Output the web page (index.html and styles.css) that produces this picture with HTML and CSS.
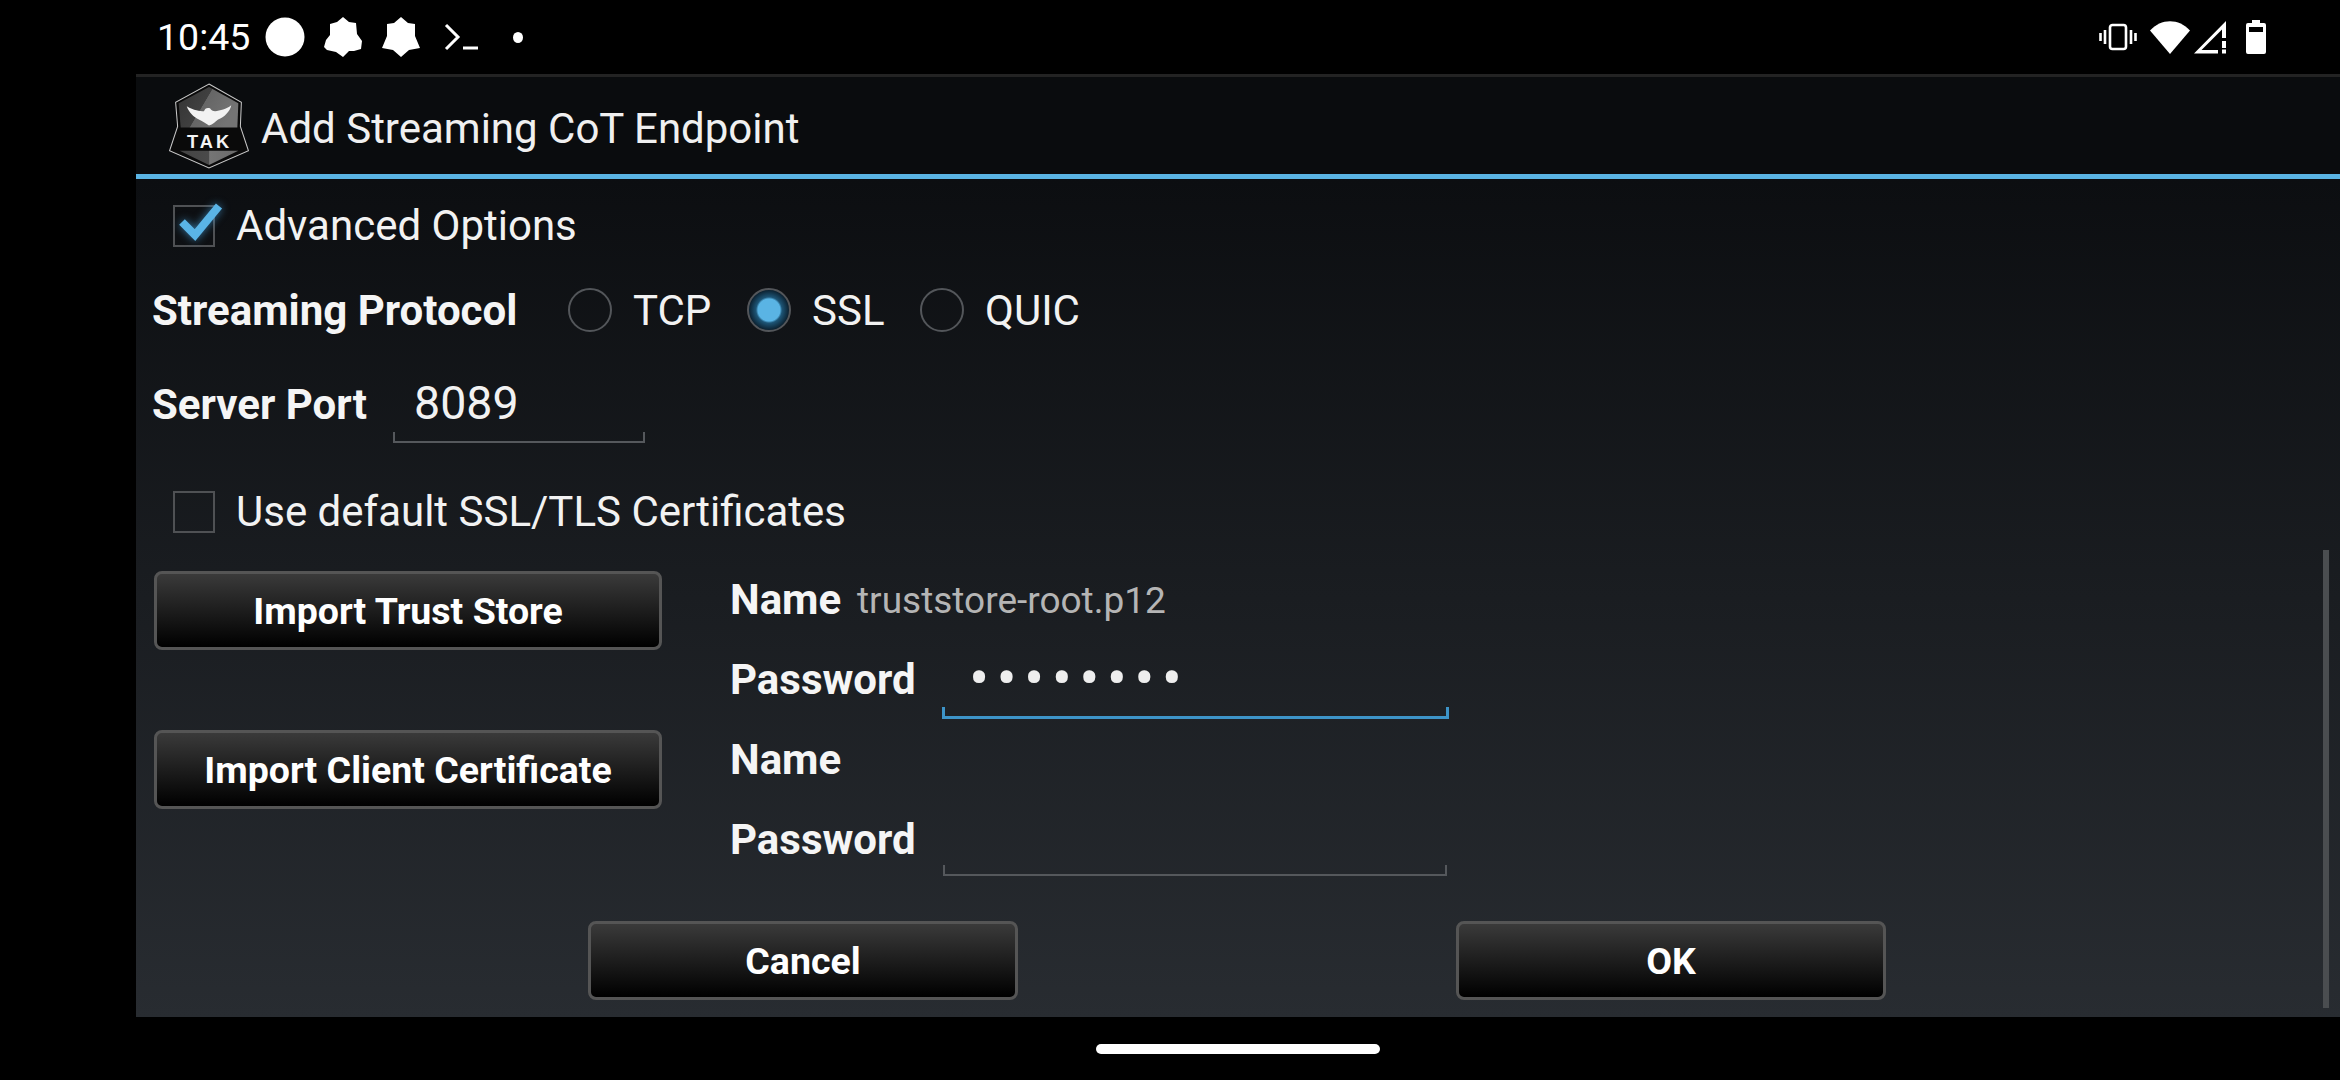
FILE: index.html
```html
<!DOCTYPE html>
<html lang="en">
  <head>
    <meta charset="UTF-8" />
    <title>Add Streaming CoT Endpoint</title>
    <link rel="stylesheet" href="styles.css">
  </head>
  <body>
    <header class="status-bar">
      <div class="status-left">
        <span class="clock">10:45</span>
        <svg class="status-icon" width="40" height="40" viewBox="0 0 40 40"><ellipse cx="20" cy="20" rx="19.500" ry="19.500" fill="#fff"/></svg>
        <svg class="status-icon badge-a" width="38" height="40" viewBox="0 0 38 40"><path d="M19 0l6 5 7 1 1 11 5 7-1 8-7 2-5 0-6 6-7-5-9-2-3-3 2-7 4-5V7l7-2z" fill="#fff"/></svg>
        <svg class="status-icon badge-b" width="38" height="40" viewBox="0 0 38 40"><path d="M19 0l7 6 7 1 0 12 5 12-11 2-8 7-8-7-11-2 5-12 0-12 7-1z" fill="#fff"/></svg>
        <svg class="status-icon term" width="34" height="28" viewBox="0 0 34 28"><path d="M2 2l12 12L2 26" fill="none" stroke="#fff" stroke-width="3"/><path d="M19 25h15" stroke="#fff" stroke-width="3"/></svg>
        <span class="status-dot"></span>
      </div>
      <div class="status-right">
        <svg width="38" height="28" viewBox="0 0 38 28"><rect x="11" y="2" width="16" height="24" rx="2.500" fill="none" stroke="#fff" stroke-width="2.600"/><path d="M6 7v14M1.500 10v8M32 7v14M36.500 10v8" stroke="#fff" stroke-width="2.600"/></svg>
        <svg class="wifi" width="40" height="33" viewBox="0 0 40 33"><path d="M0 9.500C11 -3 29 -3 40 9.500L20 33z" fill="#fff"/></svg>
        <svg class="signal" width="33" height="33" viewBox="0 0 33 33"><path d="M32 0v17h-4V8.500L7.500 29H24v3.500H0z" fill="#fff"/><path d="M28 20h4v7h-4zM28 28.500h4v4h-4z" fill="#fff"/></svg>
        <svg class="battery" width="20" height="34" viewBox="0 0 20 34"><path fill-rule="evenodd" d="M6 0h8v3h4a2 2 0 0 1 2 2v27a2 2 0 0 1-2 2H2a2 2 0 0 1-2-2V5a2 2 0 0 1 2-2h4zM3 7v5h14V7z" fill="#fff"/></svg>
      </div>
    </header>

    <main class="app">
      <div class="title-bar">
        <!-- TAK shield, cropped to the size of the launcher icon -->
        <svg class="tak-logo" width="82" height="86" viewBox="10 9 78 85">
          <defs>
            <linearGradient id="shieldTop" x1="0" y1="0" x2="1" y2="0.4">
              <stop offset="0" stop-color="#333"/>
              <stop offset="0.5" stop-color="#404040"/>
              <stop offset="0.51" stop-color="#666"/>
              <stop offset="1" stop-color="#747474"/>
            </linearGradient>
            <linearGradient id="shieldBottom" x1="0" y1="0" x2="1" y2="0">
              <stop offset="0" stop-color="#444"/>
              <stop offset="0.5" stop-color="#4a4a4a"/>
              <stop offset="0.51" stop-color="#757575"/>
              <stop offset="1" stop-color="#6a6a6a"/>
            </linearGradient>
          </defs>
          <path d="M49 10L81 28 80 52 88 76 49 93 10 76 18 52 16 28z" fill="#0a0a0a" stroke="#c9c9c9" stroke-width="1"/>
          <path d="M49 13L78 29 77 53H21L19 29z" fill="url(#shieldTop)"/>
          <path d="M20 76H78L49 90z" fill="url(#shieldBottom)"/>
          <path d="M27 32C34 36 40 37 44 37 45 34 47 33 50 34 51 36 53 37 55 37 60 36 66 35 71 31 70 37 64 43 58 45 55 47 53 50 49 51 46 49 43 47 39 45 34 43 29 38 27 32z" fill="#f2f2f2"/>
          <text class="tak-text" x="49.500" y="73" text-anchor="middle">TAK</text>
        </svg>
        <h1 class="title">Add Streaming CoT Endpoint</h1>
      </div>

      <form class="content">
        <div class="row row-advanced">
          <label class="check">
            <span class="check-box">
              <svg class="check-mark" width="56" height="48" viewBox="0 0 56 48"><path d="M9 25l13 13L46 9" fill="none" stroke="#5ab4e6" stroke-width="8"/></svg>
            </span>
            <span class="check-text">Advanced Options</span>
          </label>
        </div>

        <div class="row row-protocol">
          <span class="label protocol-label">Streaming Protocol</span>
          <span class="radio"></span><span class="radio-text">TCP</span>
          <span class="radio radio-on"></span><span class="radio-text">SSL</span>
          <span class="radio"></span><span class="radio-text">QUIC</span>
        </div>

        <div class="row row-port">
          <span class="label port-label">Server Port</span>
          <div class="field field-port">
            <span class="field-value port-value">8089</span>
            <span class="field-line"></span>
          </div>
        </div>

        <div class="row row-default">
          <label class="check">
            <span class="check-box"></span>
            <span class="check-text">Use default SSL/TLS Certificates</span>
          </label>
        </div>

        <div class="certs">
          <div class="cert-buttons">
            <button type="button" class="btn btn-cert">Import Trust Store</button>
            <button type="button" class="btn btn-cert">Import Client Certificate</button>
          </div>
          <div class="cert-rows">
            <div class="cert-row">
              <span class="label name-label">Name</span>
              <span class="file-name">truststore-root.p12</span>
            </div>
            <div class="cert-row">
              <span class="label pass-label">Password</span>
              <div class="field field-pass field-focus">
                <span class="field-value dots">••••••••</span>
                <span class="field-line"></span>
              </div>
            </div>
            <div class="cert-row">
              <span class="label name-label">Name</span>
            </div>
            <div class="cert-row">
              <span class="label pass-label">Password</span>
              <div class="field field-pass field-idle">
                <span class="field-value"></span>
                <span class="field-line"></span>
              </div>
            </div>
          </div>
        </div>

        <div class="actions">
          <button type="button" class="btn btn-action">Cancel</button>
          <button type="button" class="btn btn-action">OK</button>
        </div>

        <div class="scrollbar"></div>
      </form>
    </main>

    <div class="nav-bar"><span class="home-pill"></span></div>
  </body>
</html>
```

FILE: styles.css
```css
* {
  box-sizing: border-box;
}

html,
body {
  margin: 0;
  padding: 0;
  width: 2340px;
  height: 1080px;
  overflow: hidden;
  background-color: #000;
}

body {
  font-family: Roboto, "Noto Sans", sans-serif;
  color: #f2f2f2;
  display: flex;
  flex-direction: column;
}

/* Status bar */
.status-bar {
  height: 74px;
  flex: none;
  display: flex;
  justify-content: space-between;
  align-items: center;
  padding-left: 157px;
  padding-right: 74px;
  color: #fff;
}

.status-left,
.status-right {
  display: flex;
  align-items: center;
}

.clock {
  font-size: 37.500px;
  width: 108px;
}

.status-icon {
  display: block;
}

.badge-a {
  margin-left: 19px;
}

.badge-b {
  margin-left: 20px;
}

.term {
  margin-left: 24px;
}

.status-dot {
  width: 10px;
  height: 11px;
  margin-left: 35px;
  border-radius: 50%;
  background-color: #fff;
}

.status-right svg {
  display: block;
}

.status-right .wifi {
  margin-left: 13px;
}

.status-right .signal {
  margin-left: 4px;
}

.status-right .battery {
  margin-left: 19px;
}

/* App window */
.app {
  margin-left: 136px;
  height: 943px;
  flex: none;
  display: flex;
  flex-direction: column;
  border-top: 3px solid #232323;
}

.title-bar {
  height: 102px;
  flex: none;
  display: flex;
  align-items: center;
  padding-left: 32px;
  background-color: #0a0c0e;
  border-bottom: 5px solid #5ab4e4;
}

.tak-logo {
  display: block;
  flex: none;
  margin-top: 1px;
}

.tak-text {
  font-family: "Liberation Sans", sans-serif;
  font-size: 18px;
  font-weight: 700;
  letter-spacing: 3px;
  fill: #f5f5f5;
}

.title {
  margin: 5px 0 0 11px;
  font-size: 42px;
  font-weight: 400;
  color: #f0f0f0;
}

.content {
  position: relative;
  flex: 1;
  padding-left: 16px;
  background: linear-gradient(#0c0e11, #282c31);
}

.row {
  display: flex;
  align-items: center;
}

.row-advanced {
  height: 93px;
}

.row-protocol {
  height: 76px;
}

.row-port {
  height: 112px;
}

.row-default {
  height: 95px;
  margin-top: 4px;
}

.label {
  font-size: 42px;
  font-weight: 700;
  color: #f5f5f5;
}

/* Check boxes */
.check {
  display: flex;
  align-items: center;
  margin-left: 21px;
}

.check-box {
  position: relative;
  width: 42px;
  height: 42px;
  border: 2px solid #4f5154;
}

.check-mark {
  position: absolute;
  left: -2px;
  top: -10px;
  filter: drop-shadow(0 0 4px rgba(70, 160, 220, 0.7));
}

.check-text {
  margin-left: 21px;
  font-size: 42px;
}

/* Radio group */
.protocol-label {
  width: 416px;
}

.radio {
  width: 44px;
  height: 44px;
  flex: none;
  border: 2px solid #53565a;
  border-radius: 50%;
}

.radio-on {
  background: radial-gradient(circle, #5ab4e4 0 11px, #1d5576 13px, #0c2130 20px);
}

.radio-text {
  width: 135px;
  padding-left: 21px;
  font-size: 42px;
}

.radio-text:nth-of-type(5) {
  width: 129px;
}

/* Text fields */
.field {
  display: flex;
  flex-direction: column;
}

.field-value {
  display: block;
  flex: 1;
  min-height: 0;
}

.field-line {
  display: block;
  height: 11px;
  flex: none;
  border: 2px solid #55585c;
  border-top: none;
}

.port-label {
  width: 241px;
}

.field-port {
  width: 252px;
  height: 78px;
}

.port-value {
  padding-left: 21px;
  font-size: 46.500px;
  line-height: 76px;
}

.field-pass {
  width: 507px;
  height: 80px;
}

.field-focus .field-line {
  height: 12px;
  border-width: 3px;
  border-top: none;
  border-color: #3d94c8;
}

.field-idle {
  width: 504px;
  height: 77px;
  margin-left: 1px;
  align-self: flex-start;
}

.dots {
  padding-left: 27px;
  font-size: 60px;
  line-height: 79px;
  letter-spacing: 7.300px;
  color: #eee;
  white-space: nowrap;
}

/* Certificates */
.certs {
  display: flex;
  height: 320px;
}

.cert-buttons {
  display: flex;
  flex-direction: column;
  gap: 80px;
  padding-top: 12px;
  margin-left: 2px;
  margin-right: 68px;
}

.cert-row {
  height: 80px;
  display: flex;
  align-items: center;
}

.name-label {
  width: 127px;
}

.pass-label {
  width: 212px;
}

.file-name {
  font-size: 37px;
  margin-top: 2px;
  color: #b5b5b5;
}

/* Buttons */
.btn {
  height: 79px;
  padding: 0;
  font-family: inherit;
  font-size: 37.500px;
  font-weight: 700;
  color: #fff;
  border: 3px solid #555;
  border-radius: 8px;
  background: linear-gradient(#3a3a3a, #000);
}

.btn-cert {
  width: 508px;
}

.btn-action {
  width: 430px;
}

.actions {
  display: flex;
  justify-content: center;
  gap: 438px;
  margin-top: 42px;
  margin-left: -18px;
}

.scrollbar {
  position: absolute;
  right: 11px;
  top: 371px;
  width: 6px;
  height: 458px;
  background-color: #4a4d50;
}

/* Navigation bar */
.nav-bar {
  flex: 1;
  display: flex;
  justify-content: center;
  padding-top: 27px;
  padding-left: 136px;
}

.home-pill {
  width: 284px;
  height: 10px;
  border-radius: 5px;
  background-color: #fff;
}
```
